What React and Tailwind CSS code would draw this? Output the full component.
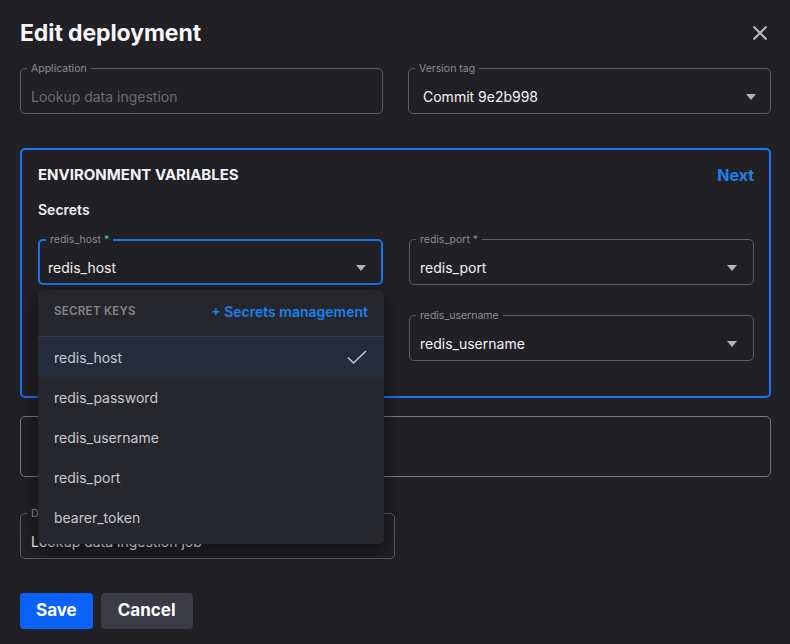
import React from 'react';

const Caret = () => (
  <svg width="10" height="6" viewBox="0 0 10 6" className="shrink-0">
    <path d="M0 0h10L5 6z" fill="#b4b4b9" />
  </svg>
);

// outlined field with a notched label on the border
const Field = ({ label, required, value, muted, select, focused, wide, className = '' }) => (
  <div
    className={
      'relative h-[46px] rounded-[5px] flex items-center pt-[11px] ' +
      (focused
        ? 'border-2 border-[#1a73f0] pl-[8px] pr-[15px] '
        : wide
        ? 'border border-[#5c5c63] pl-[14px] pr-[14px] '
        : 'border border-[#5c5c63] pl-[10px] pr-[16px] ') +
      className
    }
  >
    <span
      className={
        'absolute left-[6px] px-[4px] bg-[#202025] text-[10.5px] leading-[14px] text-[#8c8c92] ' +
        (focused ? '-top-[8px]' : '-top-[7px]')
      }
    >
      {label}
      {required && <span className={focused ? ' text-[#4fd08a]' : ''}> *</span>}
    </span>
    <span className={'flex-1 text-[14px] ' + (muted ? 'text-[#6c6c72]' : 'text-[#f4f4f6]')}>{value}</span>
    {select && <Caret />}
  </div>
);

const keys = ['redis_host', 'redis_password', 'redis_username', 'redis_port', 'bearer_token'];

const SecretMenu = () => (
  <div className="absolute left-0 top-[51px] w-[346px] z-10 rounded-[5px] bg-[#26272c] shadow-[0_6px_20px_rgba(0,0,0,0.5)] pb-[7px]">
    <div className="h-[47px] flex items-center justify-between px-4 pb-[3px] border-b border-[#38393f]">
      <span className="text-[11.5px] font-semibold tracking-[0.3px] text-[#85858b]">SECRET KEYS</span>
      <span className="text-[14px] font-semibold text-[#1a82f0]">+ Secrets management</span>
    </div>
    {keys.map((k, i) => (
      <div
        key={k}
        className={
          'h-[40px] flex items-center justify-between px-4 text-[14px] text-[#c9c9ce] ' +
          (i === 0 ? 'bg-[#232b3c]' : '')
        }
      >
        <span>{k}</span>
        {i === 0 && (
          <svg width="22" height="16" viewBox="0 0 22 16" fill="none" stroke="#c4c4c9" strokeWidth="1.6">
            <path d="M2 8.5l5.5 5.5L20 2" />
          </svg>
        )}
      </div>
    ))}
  </div>
);

export default function App() {
  return (
    <div
      className="h-screen w-full bg-[#202025] pl-5 pr-[19px] text-white overflow-hidden"
      style={{ fontFamily: 'Inter, "Noto Sans", sans-serif' }}
    >
      <div className="h-[66px] flex items-center justify-between">
        <h1 className="text-[23px] font-bold tracking-[-0.1px] text-[#f7f7f9]">Edit deployment</h1>
        <svg width="16" height="16" viewBox="0 0 16 16" stroke="#b9b9be" strokeWidth="2" className="mr-[3px]">
          <path d="M1.5 1.5l13 13M14.5 1.5l-13 13" />
        </svg>
      </div>

      <div className="grid grid-cols-2 gap-[25px] mt-[2px]">
        <Field label="Application" value="Lookup data ingestion" muted />
        <Field label="Version tag" value="Commit 9e2b998" select wide />
      </div>

      <div className="mt-[34px] h-[250px] rounded-[5px] border-2 border-[#1a73f0] pl-4 pr-[15px] pt-[14px]">
        <div className="flex items-center justify-between h-[22px]">
          <span className="text-[15px] font-bold text-[#f4f4f6]">ENVIRONMENT VARIABLES</span>
          <span className="text-[16px] font-bold text-[#1a82f0]">Next</span>
        </div>
        <div className="mt-[13px] text-[14px] font-semibold text-[#f0f0f2]">Secrets</div>
        <div className="grid grid-cols-2 gap-x-[26px] gap-y-[30px] mt-[19px]">
          <div className="relative">
            <Field label="redis_host" required value="redis_host" select focused />
            <SecretMenu />
          </div>
          <Field label="redis_port" required value="redis_port" select />
          <Field label="redis_password" value="redis_password" select />
          <Field label="redis_username" value="redis_username" select />
        </div>
      </div>

      <div className="mt-[18px] h-[61px] rounded-[5px] border border-[#7a7a80]" />

      <div className="mt-[36px] w-[375px]">
        <Field label="Description" value="Lookup data ingestion job" />
      </div>

      <div className="mt-[34px] flex gap-2">
        <button className="h-[36px] px-4 rounded-[4px] bg-[#0b62f7] text-[17px] font-bold text-white">Save</button>
        <button className="h-[36px] px-[17px] rounded-[4px] bg-[#3b3b46] text-[17px] font-bold text-white">Cancel</button>
      </div>
    </div>
  );
}
